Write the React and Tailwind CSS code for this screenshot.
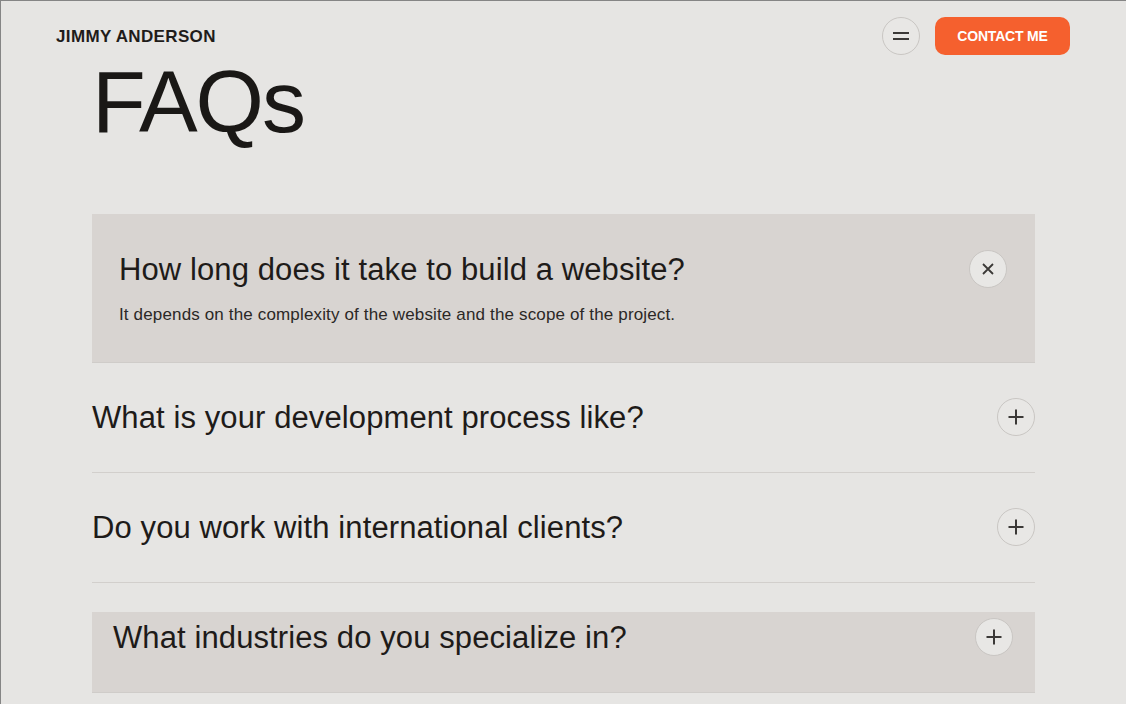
import React from "react";

const font = { fontFamily: '"Liberation Sans", Arial, sans-serif' };

function CircleBtn({ children, className = "" }) {
  return (
    <div
      className={
        "flex h-[38px] w-[38px] shrink-0 items-center justify-center rounded-full border-[1.5px] border-[#c9c6c3] bg-[#e8e7e5] " +
        className
      }
    >
      {children}
    </div>
  );
}

const Plus = () => (
  <svg width="18" height="18" viewBox="0 0 18 18">
    <path d="M9 1.5v15M1.5 9h15" stroke="#3b3937" strokeWidth="2" />
  </svg>
);

const Close = () => (
  <svg width="14" height="14" viewBox="0 0 14 14">
    <path d="M2 2l10 10M12 2L2 12" stroke="#3b3937" strokeWidth="1.8" />
  </svg>
);

export default function App() {
  return (
    <div
      style={font}
      className="h-[704px] w-[1126px] overflow-hidden border-l border-t border-[#858585] bg-[#e6e5e3] text-[#1e1b19]"
    >
      <header className="flex items-center justify-between pl-[55px] pr-[56px] pt-[16px]">
        <div className="pt-[2px] text-[17px] font-bold tracking-[0.35px] text-[#1f1c1a]">
          JIMMY ANDERSON
        </div>
        <div className="flex items-center gap-[15px]">
          <CircleBtn>
            <svg width="18" height="10" viewBox="0 0 18 10">
              <path d="M1 2h16M1 8h16" stroke="#3b3937" strokeWidth="2" />
            </svg>
          </CircleBtn>
          <div className="flex h-[38px] w-[135px] items-center justify-center rounded-[10px] bg-[#f5602e] text-[14px] font-bold tracking-[-0.2px] text-white">
            CONTACT ME
          </div>
        </div>
      </header>

      <div className="px-[91px]">
        <h1 className="mt-[3px] text-[88px] font-normal leading-none tracking-[-2px] text-[#1a1816]">
          FAQs
        </h1>

        <div className="mt-[68px]">
          <div className="border-b border-[#cfccc9] bg-[#d8d4d1] pb-[35px] pl-[27px] pr-[28px] pt-[36px]">
            <div className="flex h-[38px] items-center justify-between">
              <div className="text-[31px] leading-[37px] tracking-[0.1px]">
                How long does it take to build a website?
              </div>
              <CircleBtn className="bg-[#e6e5e3]">
                <Close />
              </CircleBtn>
            </div>
            <p className="mt-[15px] text-[17px] leading-[24px] tracking-[0.15px] text-[#2b2826]">
              It depends on the complexity of the website and the scope of the project.
            </p>
          </div>

          <div className="border-b border-[#d2cfcc] pb-[36px] pt-[35px]">
            <div className="flex h-[38px] items-center justify-between">
              <div className="text-[31px] leading-[37px] tracking-[0.1px]">
                What is your development process like?
              </div>
              <CircleBtn>
                <Plus />
              </CircleBtn>
            </div>
          </div>

          <div className="border-b border-[#d2cfcc] pb-[36px] pt-[35px]">
            <div className="flex h-[38px] items-center justify-between">
              <div className="text-[31px] leading-[37px] tracking-[0.1px]">
                Do you work with international clients?
              </div>
              <CircleBtn>
                <Plus />
              </CircleBtn>
            </div>
          </div>

          <div className="mt-[29px] border-b border-[#cfccc9] bg-[#d8d4d1] pb-[36px] pl-[21px] pr-[22px] pt-[6px]">
            <div className="flex h-[38px] items-center justify-between">
              <div className="text-[31px] leading-[37px] tracking-[0.1px]">
                What industries do you specialize in?
              </div>
              <CircleBtn className="bg-[#e6e5e3]">
                <Plus />
              </CircleBtn>
            </div>
          </div>
        </div>
      </div>
    </div>
  );
}
